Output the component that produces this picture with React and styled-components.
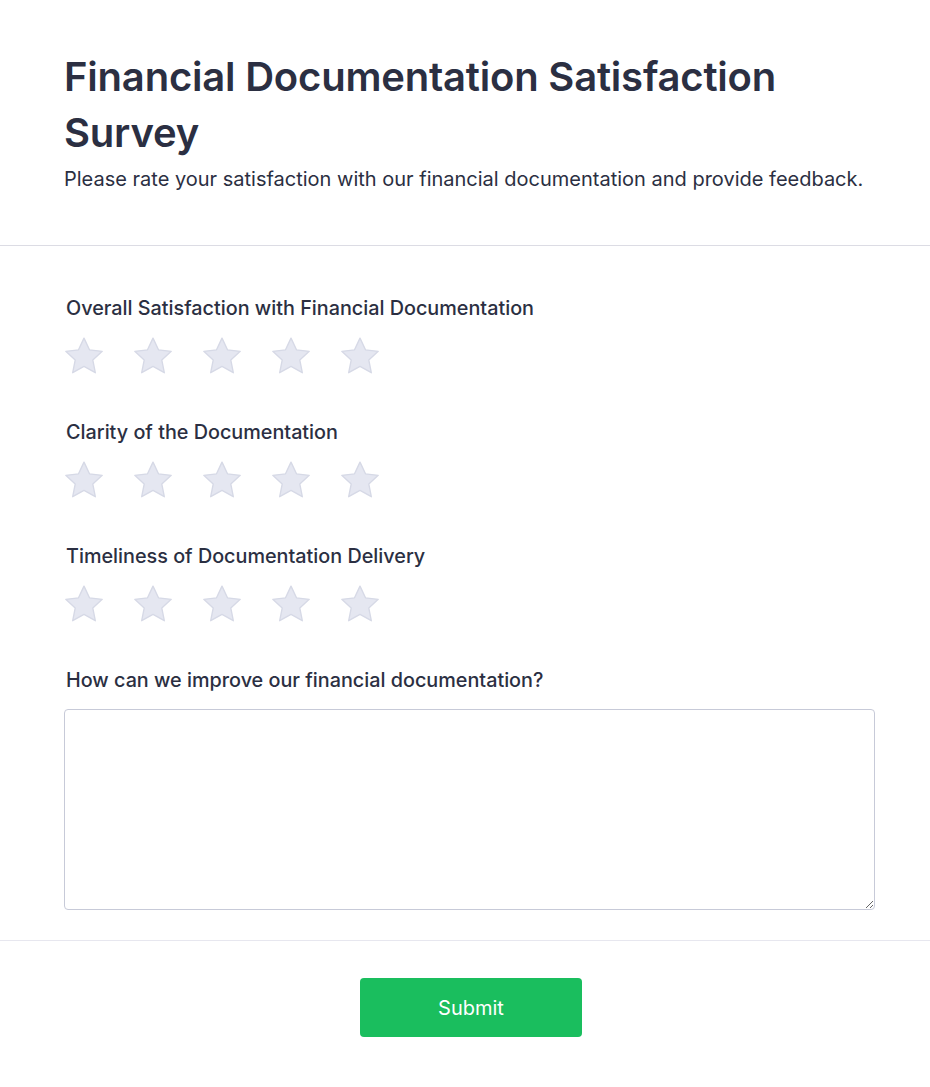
import React, { useState } from "react";
import styled, { createGlobalStyle } from "styled-components";

const Global = createGlobalStyle`
  html, body { margin: 0; padding: 0; background: #ffffff; }
  body { font-family: Inter, "Noto Sans", sans-serif; color: #2d3142; }
  * { box-sizing: border-box; }
`;

const Page = styled.div`
  width: 930px;
  background: #fff;
`;

const Header = styled.header`
  padding: 49px 64px 0;
  height: 246px;
  border-bottom: 1px solid #dcdce4;
`;

const Title = styled.h1`
  margin: 0;
  font-size: 40px;
  line-height: 56px;
  font-weight: 600;
  letter-spacing: -0.2px;
  color: #2b2f42;
`;

const Subtitle = styled.p`
  margin: 4px 0 0;
  font-size: 20px;
  line-height: 28px;
  font-weight: 400;
  color: #2b2f42;
`;

const Body = styled.section`
  padding: 47px 55px 30px 64px;
  border-bottom: 1px solid #e7e7ef;
`;

const Question = styled.div`
  display: flex;
  flex-direction: column;
  margin-bottom: ${(p) => (p.$last ? "0" : "40px")};
`;

const Label = styled.label`
  display: block;
  font-size: 19.8px;
  line-height: 30px;
  font-weight: 500;
  color: #2b2f42;
  margin-bottom: 14px;
  padding-left: 2px;
`;

const Stars = styled.div`
  display: flex;
  gap: 31px;
  height: 40px;
  padding-left: 1px;
  align-items: flex-start;
`;

const StarButton = styled.button`
  border: 0;
  background: none;
  padding: 0;
  width: 38px;
  height: 38px;
  cursor: pointer;
  display: flex;
  svg { display: block; }
`;

const TextArea = styled.textarea`
  width: 811px;
  height: 201px;
  border: 1px solid #c7cad8;
  border-radius: 4px;
  resize: vertical;
  font-family: inherit;
  font-size: 16px;
  padding: 10px;
  display: block;
  outline: none;
`;

const Footer = styled.footer`
  display: flex;
  justify-content: center;
  padding: 37px 0 50px 12px;
`;

const SubmitButton = styled.button`
  width: 222px;
  height: 59px;
  border: 0;
  border-radius: 4px;
  background: #1abe5e;
  color: #ffffff;
  font-family: Inter, sans-serif;
  font-size: 20px;
  font-weight: 400;
  cursor: pointer;
`;

function Star({ active }) {
  return (
    <svg width="38" height="38" viewBox="2.2 2.0 19.6 19.6">
      <path
        d="M12 2.6l2.83 6.02 6.57.78-4.85 4.52 1.28 6.5L12 17.15l-5.83 3.27 1.28-6.5L2.6 9.4l6.57-.78z"
        fill={active ? "#f5b301" : "#e5e7f1"}
        stroke={active ? "#e0a300" : "#d6d9e6"}
        strokeWidth="0.7"
        strokeLinejoin="round"
      />
    </svg>
  );
}

function Rating() {
  const [val, setVal] = useState(0);
  return (
    <Stars>
      {[1, 2, 3, 4, 5].map((n) => (
        <StarButton key={n} type="button" onClick={() => setVal(n)} aria-label={`${n} star`}>
          <Star active={n <= val} />
        </StarButton>
      ))}
    </Stars>
  );
}

export default function App() {
  const questions = [
    "Overall Satisfaction with Financial Documentation",
    "Clarity of the Documentation",
    "Timeliness of Documentation Delivery",
  ];
  return (
    <Page>
      <Global />
      <Header>
        <Title>Financial Documentation Satisfaction Survey</Title>
        <Subtitle>
          Please rate your satisfaction with our financial documentation and provide feedback.
        </Subtitle>
      </Header>
      <Body>
        {questions.map((q) => (
          <Question key={q}>
            <Label>{q}</Label>
            <Rating />
          </Question>
        ))}
        <Question $last>
          <Label>How can we improve our financial documentation?</Label>
          <TextArea />
        </Question>
      </Body>
      <Footer>
        <SubmitButton type="button">Submit</SubmitButton>
      </Footer>
    </Page>
  );
}
